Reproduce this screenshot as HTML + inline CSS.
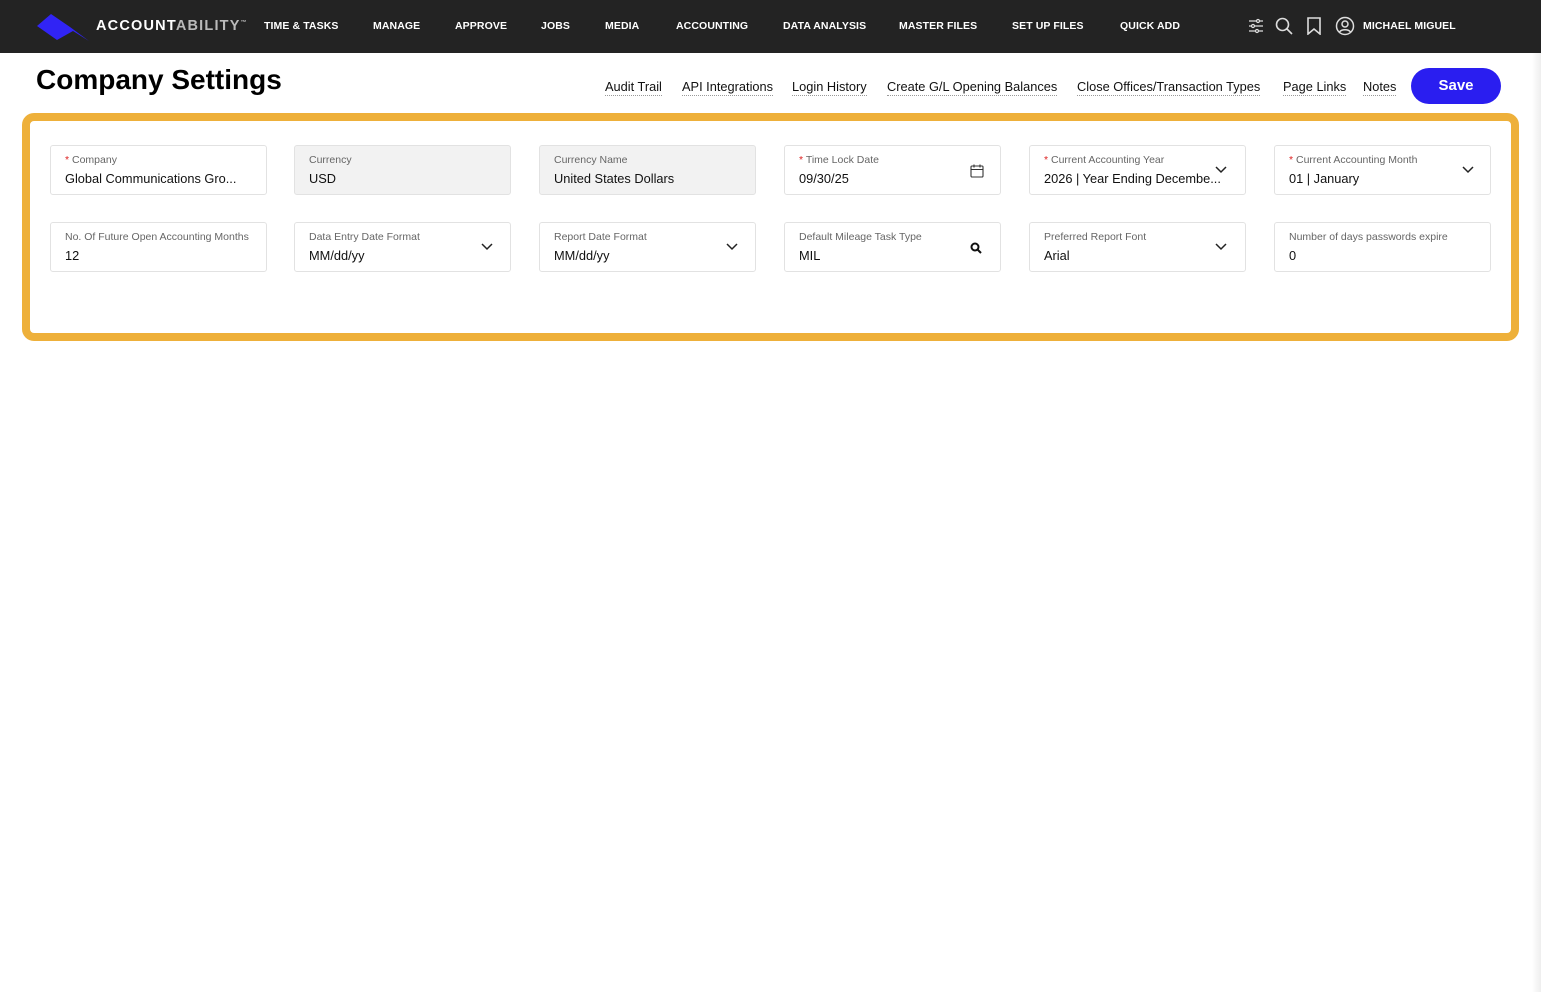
<!DOCTYPE html>
<html><head><meta charset="utf-8"><style>
*{box-sizing:border-box;margin:0;padding:0}
body{width:1541px;height:992px;background:#fff;font-family:"Liberation Sans",sans-serif;position:relative;overflow:hidden}
.hdr{position:absolute;left:0;top:0;width:1541px;height:53px;background:#232323}
.nav{position:absolute;top:20px;color:#fff;font-size:10.5px;font-weight:bold;letter-spacing:.1px}
.title{position:absolute;left:36px;top:64px;font-size:28px;font-weight:bold;color:#000}
.lnk{position:absolute;top:79px;font-size:12.8px;color:#111;border-bottom:1px dotted #999;padding-bottom:1px}
.save{position:absolute;left:1411px;top:68px;width:90px;height:36px;border-radius:18px;background:#2a1ef0;color:#fff;font-weight:bold;font-size:15px;text-align:center;line-height:36px}
.box{position:absolute;left:22px;top:113px;width:1497px;height:228px;border:8px solid #eeb03a;border-radius:12px}
.f{position:absolute;width:217px;height:50px;border:1px solid #e2e2e2;border-radius:3px;background:#fff}
.f.g{background:#f2f2f2}
.f .l{position:absolute;left:14px;top:8px;font-size:10.5px;color:#666;white-space:nowrap}
.f .l b{color:#d22;font-weight:normal}
.f .v{position:absolute;left:14px;top:25px;font-size:12.8px;color:#111;white-space:nowrap}
.f svg{position:absolute;right:16px;top:18px}
.sb{position:absolute;right:0;top:53px;width:9px;height:939px;background:linear-gradient(to right,#fff,#eee)}
</style></head><body>
<div class="hdr">
<svg style="position:absolute;left:37px;top:13px" width="54" height="28" viewBox="0 0 54 28"><polygon points="0,13 14,1 33,14 52,28 36,18 20,27" fill="#3124f5"/></svg>
<div style="position:absolute;left:96px;top:18px;color:#fff;font-size:14.5px;font-weight:bold;letter-spacing:1.2px">ACCOUNT<span style="color:#bbb">ABILITY</span><sup style="font-size:6px;color:#bbb">™</sup></div>
<div class="nav" style="left:264px">TIME &amp; TASKS</div>
<div class="nav" style="left:373px">MANAGE</div>
<div class="nav" style="left:455px">APPROVE</div>
<div class="nav" style="left:541px">JOBS</div>
<div class="nav" style="left:605px">MEDIA</div>
<div class="nav" style="left:676px">ACCOUNTING</div>
<div class="nav" style="left:783px">DATA ANALYSIS</div>
<div class="nav" style="left:899px">MASTER FILES</div>
<div class="nav" style="left:1012px">SET UP FILES</div>
<div class="nav" style="left:1120px">QUICK ADD</div>
<svg style="position:absolute;left:1248px;top:18px" width="16" height="16" viewBox="0 0 16 16" stroke="#ddd" fill="none" stroke-width="1.2"><path d="M1 3h14M1 8h14M1 13h14"/><circle cx="10" cy="3" r="1.5" fill="#232323"/><circle cx="5" cy="8" r="1.5" fill="#232323"/><circle cx="9" cy="13" r="1.5" fill="#232323"/></svg>
<svg style="position:absolute;left:1275px;top:17px" width="18" height="18" viewBox="0 0 18 18" stroke="#ddd" fill="none" stroke-width="1.6"><circle cx="7.5" cy="7.5" r="6"/><path d="M12 12l5 5"/></svg>
<svg style="position:absolute;left:1306px;top:17px" width="16" height="18" viewBox="0 0 16 18" stroke="#ddd" fill="none" stroke-width="1.6"><path d="M2 1h12v16l-6-5-6 5z"/></svg>
<svg style="position:absolute;left:1335px;top:16px" width="20" height="20" viewBox="0 0 20 20" stroke="#ddd" fill="none" stroke-width="1.5"><circle cx="10" cy="10" r="8.5"/><circle cx="10" cy="8" r="3"/><path d="M4.5 16c2-3 9-3 11 0"/></svg>
<div class="nav" style="left:1363px">MICHAEL MIGUEL</div>
</div>
<div class="title">Company Settings</div>
<div class="lnk" style="left:605px">Audit Trail</div>
<div class="lnk" style="left:682px">API Integrations</div>
<div class="lnk" style="left:792px">Login History</div>
<div class="lnk" style="left:887px">Create G/L Opening Balances</div>
<div class="lnk" style="left:1077px">Close Offices/Transaction Types</div>
<div class="lnk" style="left:1283px">Page Links</div>
<div class="lnk" style="left:1363px">Notes</div>
<div class="save">Save</div>
<div class="box"></div>

<div class="f" style="left:50px;top:145px"><div class="l"><b>*</b> Company</div><div class="v">Global Communications Gro...</div></div>
<div class="f g" style="left:294px;top:145px"><div class="l">Currency</div><div class="v">USD</div></div>
<div class="f g" style="left:539px;top:145px"><div class="l">Currency Name</div><div class="v">United States Dollars</div></div>
<div class="f" style="left:784px;top:145px"><div class="l"><b>*</b> Time Lock Date</div><div class="v">09/30/25</div><svg width="14" height="14" viewBox="0 0 14 14" stroke="#333" fill="none" stroke-width="1.1"><rect x="1" y="2" width="12" height="11" rx="1"/><path d="M1 5.5h12M4 0.5v3M10 0.5v3"/></svg></div>
<div class="f" style="left:1029px;top:145px"><div class="l"><b>*</b> Current Accounting Year</div><div class="v">2026 | Year Ending Decembe...</div><svg width="12" height="8" viewBox="0 0 12 8" stroke="#222" fill="none" stroke-width="1.5" style="top:20px;right:18px"><path d="M1 1l5 5 5-5"/></svg></div>
<div class="f" style="left:1274px;top:145px"><div class="l"><b>*</b> Current Accounting Month</div><div class="v">01 | January</div><svg width="12" height="8" viewBox="0 0 12 8" stroke="#222" fill="none" stroke-width="1.5" style="top:20px;right:16px"><path d="M1 1l5 5 5-5"/></svg></div>

<div class="f" style="left:50px;top:222px"><div class="l">No. Of Future Open Accounting Months</div><div class="v">12</div></div>
<div class="f" style="left:294px;top:222px"><div class="l">Data Entry Date Format</div><div class="v">MM/dd/yy</div><svg width="12" height="8" viewBox="0 0 12 8" stroke="#222" fill="none" stroke-width="1.5" style="top:20px;right:17px"><path d="M1 1l5 5 5-5"/></svg></div>
<div class="f" style="left:539px;top:222px"><div class="l">Report Date Format</div><div class="v">MM/dd/yy</div><svg width="12" height="8" viewBox="0 0 12 8" stroke="#222" fill="none" stroke-width="1.5" style="top:20px;right:17px"><path d="M1 1l5 5 5-5"/></svg></div>
<div class="f" style="left:784px;top:222px"><div class="l">Default Mileage Task Type</div><div class="v">MIL</div><svg width="12" height="12" viewBox="0 0 12 12" stroke="#111" fill="none" stroke-width="2" style="top:19px;right:18px"><circle cx="5" cy="5" r="3.5"/><path d="M7.5 7.5l3.5 3.5"/></svg></div>
<div class="f" style="left:1029px;top:222px"><div class="l">Preferred Report Font</div><div class="v">Arial</div><svg width="12" height="8" viewBox="0 0 12 8" stroke="#222" fill="none" stroke-width="1.5" style="top:20px;right:18px"><path d="M1 1l5 5 5-5"/></svg></div>
<div class="f" style="left:1274px;top:222px"><div class="l">Number of days passwords expire</div><div class="v">0</div></div>
<div class="sb"></div>
</body></html>
